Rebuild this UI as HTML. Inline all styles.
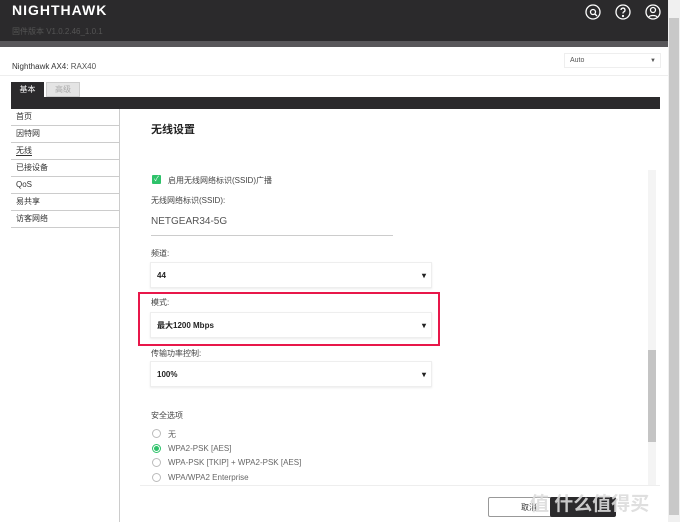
<!DOCTYPE html>
<html><head><meta charset="utf-8"><style>
*{box-sizing:border-box;margin:0;padding:0}
body{width:680px;height:522px;overflow:hidden;background:#fff;font-family:"Liberation Sans","Noto Sans CJK SC",sans-serif;position:relative;color:#333}
.a{position:absolute}
.hdr{left:0;top:0;width:668px;height:41px;background:#2b2a2c}
.band{left:0;top:41px;width:668px;height:6px;background:#58575a}
.sb{left:668px;top:0;width:12px;height:522px;background:#f0f0f0}
.side div{height:17px;border-bottom:1px solid #ccc;font-size:8px;line-height:16px;padding-left:5px;color:#333}
.sel{left:150px;width:282px;height:26px;border:1px solid #eee;box-shadow:0 1px 2px rgba(0,0,0,.08);font-size:8px;line-height:25px;padding-left:6px;color:#222;font-weight:bold}
.sel:after{content:"▾";position:absolute;right:5px;top:0;font-size:8px}
.lbl{font-size:8px;color:#444}
.rad{width:9px;height:9px;border:1px solid #bbb;border-radius:50%;left:152px}
.rl{left:168px;font-size:8px;color:#666}
</style></head><body>
<div class="a hdr"></div>
<div class="a" style="left:12px;top:2px;color:#fff;font-size:14px;font-weight:bold;letter-spacing:1px">NIGHTHAWK</div>
<div class="a" style="left:12px;top:26px;color:#555;font-size:8px">固件版本 V1.0.2.46_1.0.1</div>
<svg class="a" style="left:583px;top:3px" width="82" height="18" viewBox="0 0 82 18" fill="none" stroke="#fff" stroke-width="1.3">
<circle cx="10" cy="9" r="7"/><circle cx="10" cy="9" r="2.5"/><path d="M12 11l2 2"/>
<circle cx="40" cy="9" r="7"/><path d="M38 7a2 2 0 1 1 2.5 2c-.5.3-.5 1-.5 1.5"/><circle cx="40" cy="13" r=".5"/>
<circle cx="70" cy="9" r="7"/><circle cx="70" cy="7" r="2.5"/><path d="M66 14c1-2 7-2 8 0"/>
</svg>
<div class="a band"></div>
<div class="a sb"><div class="a" style="left:1px;top:18px;width:10px;height:497px;background:#c8c8c8"></div></div>
<div class="a" style="left:12px;top:62px;font-size:8px;color:#333">Nighthawk AX4: <span style="color:#555">RAX40</span></div>
<div class="a" style="left:564px;top:53px;width:97px;height:15px;border:1px solid #eee;font-size:7px;line-height:14px;padding-left:5px;color:#555">Auto<span style="position:absolute;right:4px;font-size:6px">▼</span></div>
<div class="a" style="left:0;top:75px;width:668px;height:1px;background:#eee"></div>
<div class="a" style="left:11px;top:82px;width:33px;height:16px;background:#2b2a2c;color:#fff;font-size:8px;text-align:center;line-height:16px">基本</div>
<div class="a" style="left:46px;top:82px;width:34px;height:15px;background:#e4e4e4;border:1px solid #ccc;color:#aaa;font-size:8px;text-align:center;line-height:14px">高级</div>
<div class="a" style="left:11px;top:97px;width:649px;height:12px;background:#2b2a2c"></div>
<div class="a side" style="left:11px;top:109px;width:108px">
<div>首页</div><div>因特网</div><div><span style="border-bottom:1px solid #333">无线</span></div><div>已接设备</div><div>QoS</div><div>易共享</div><div>访客网络</div></div>
<div class="a" style="left:119px;top:109px;width:1px;height:413px;background:#ccc"></div>
<div class="a" style="left:151px;top:121px;font-size:11px;font-weight:bold;color:#222">无线设置</div>
<div class="a" style="left:140px;top:485px;width:520px;height:1px;background:#eee"></div>
<div class="a" style="left:648px;top:170px;width:8px;height:315px;background:#f4f4f4"><div class="a" style="left:0;top:180px;width:8px;height:92px;background:#c4c4c4"></div></div>
<div class="a" style="left:152px;top:175px;width:9px;height:9px;background:#2ec26a;border-radius:1px;color:#fff;font-size:7px;line-height:9px;text-align:center">✓</div>
<div class="a lbl" style="left:168px;top:175px">启用无线网络标识(SSID)广播</div>
<div class="a lbl" style="left:151px;top:195px">无线网络标识(SSID):</div>
<div class="a" style="left:151px;top:216px;font-size:10px;color:#555">NETGEAR34-5G</div>
<div class="a" style="left:151px;top:235px;width:242px;height:1px;background:#ccc"></div>
<div class="a lbl" style="left:151px;top:248px">频道:</div>
<div class="a sel" style="top:262px">44</div>
<div class="a lbl" style="left:151px;top:297px">模式:</div>
<div class="a sel" style="top:312px">最大1200 Mbps</div>
<div class="a" style="left:138px;top:292px;width:302px;height:54px;border:2px solid #e8174a"></div>
<div class="a lbl" style="left:151px;top:348px">传输功率控制:</div>
<div class="a sel" style="top:361px">100%</div>
<div class="a lbl" style="left:151px;top:410px">安全选项</div>
<div class="a rad" style="top:429px"></div><div class="a rl" style="top:429px">无</div>
<div class="a rad" style="top:444px;border-color:#2ec26a;background:radial-gradient(#2ec26a 45%,#fff 55%)"></div><div class="a rl" style="top:444px">WPA2-PSK [AES]</div>
<div class="a rad" style="top:458px"></div><div class="a rl" style="top:458px">WPA-PSK [TKIP] + WPA2-PSK [AES]</div>
<div class="a rad" style="top:473px"></div><div class="a rl" style="top:473px">WPA/WPA2 Enterprise</div>
<div class="a" style="left:488px;top:497px;width:82px;height:20px;border:1px solid #999;border-radius:2px;font-size:8px;text-align:center;line-height:19px;color:#333">取消</div>
<div class="a" style="left:550px;top:497px;width:66px;height:20px;background:#2b2a2c;border-radius:2px"></div>
<div class="a" style="left:530px;top:489px;font-size:19px;color:rgba(220,220,220,.9);font-weight:bold">值 什么值得买</div>
</body></html>
